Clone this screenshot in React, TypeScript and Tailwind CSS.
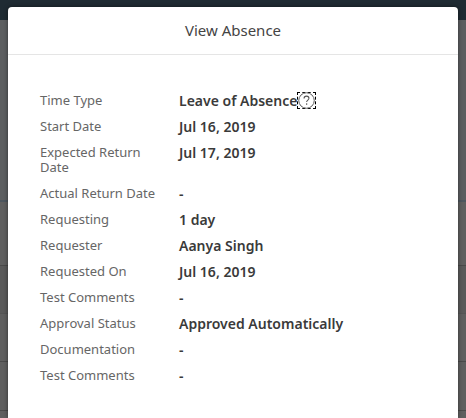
interface Detail {
  label: string
  value: string
  help?: boolean
}

const details: Detail[] = [
  { label: 'Time Type', value: 'Leave of Absence', help: true },
  { label: 'Start Date', value: 'Jul 16, 2019' },
  { label: 'Expected Return Date', value: 'Jul 17, 2019' },
  { label: 'Actual Return Date', value: '-' },
  { label: 'Requesting', value: '1 day' },
  { label: 'Requester', value: 'Aanya Singh' },
  { label: 'Requested On', value: 'Jul 16, 2019' },
  { label: 'Test Comments', value: '-' },
  { label: 'Approval Status', value: 'Approved Automatically' },
  { label: 'Documentation', value: '-' },
  { label: 'Test Comments', value: '-' },
]

function HelpButton() {
  return (
    <button
      type="button"
      aria-label="Help"
      className="-my-1 h-[17px] w-[19px] shrink-0 border border-dashed border-black flex items-center justify-center text-[#555]"
    >
      <svg width="17" height="17" viewBox="0 0 16 16" fill="none" stroke="currentColor" className="shrink-0">
        <circle cx="8" cy="8" r="7.3" strokeWidth="0.9" />
        <path d="M5.7 6.1C5.7 4.7 6.7 3.9 8 3.9s2.3.8 2.3 2c0 1.6-2.2 1.8-2.2 3.6" strokeWidth="1" />
        <path d="M8.1 10.7v1.3" strokeWidth="1.2" />
      </svg>
    </button>
  )
}

// Dimmed page behind the dialog
function Backdrop() {
  return (
    <div aria-hidden="true" className="absolute inset-0 flex flex-col overflow-hidden bg-[#5f5f5f]">
      <div className="h-5 shrink-0 bg-[#1f2b33]" />
      <div className="h-[182px] shrink-0 border-b-2 border-[#4d565e] bg-[#5c5e60]" />
      <div className="h-16 shrink-0 border-b border-[#4a4a4a]" />
      <div className="h-12 shrink-0 border-b border-[#555] bg-[#5a5a5a]" />
      <div className="h-12 shrink-0 border-b border-[#4a4a4a]" />
      <div className="h-[49px] shrink-0 border-b border-[#4a4a4a]" />
    </div>
  )
}

export default function App() {
  return (
    <div className="relative flex min-h-screen flex-col px-2 pt-[7px] font-['Noto_Sans','Open_Sans',sans-serif]">
      <Backdrop />
      <div
        role="dialog"
        aria-labelledby="dialog-title"
        className="relative flex flex-1 flex-col rounded-t bg-white shadow-[0_0_4px_rgba(0,0,0,0.5)]"
      >
        <header className="flex h-12 items-center justify-center border-b border-[#e5e5e5]">
          <h1 id="dialog-title" className="text-[15px] text-[#444]">
            View Absence
          </h1>
        </header>

        <dl className="flex flex-col gap-[11px] px-8 pt-[38px] pb-8 text-[13px] leading-[15px]">
          {details.map((detail, index) => (
            <div key={index} className="flex">
              <dt className="w-[139px] shrink-0 pr-5 text-[#666]">{detail.label}</dt>
              <dd className="flex items-center self-start text-[14px] leading-[15px] font-semibold text-[#3a3a3a]">
                {detail.value}
                {detail.help && <HelpButton />}
              </dd>
            </div>
          ))}
        </dl>
      </div>
    </div>
  )
}
